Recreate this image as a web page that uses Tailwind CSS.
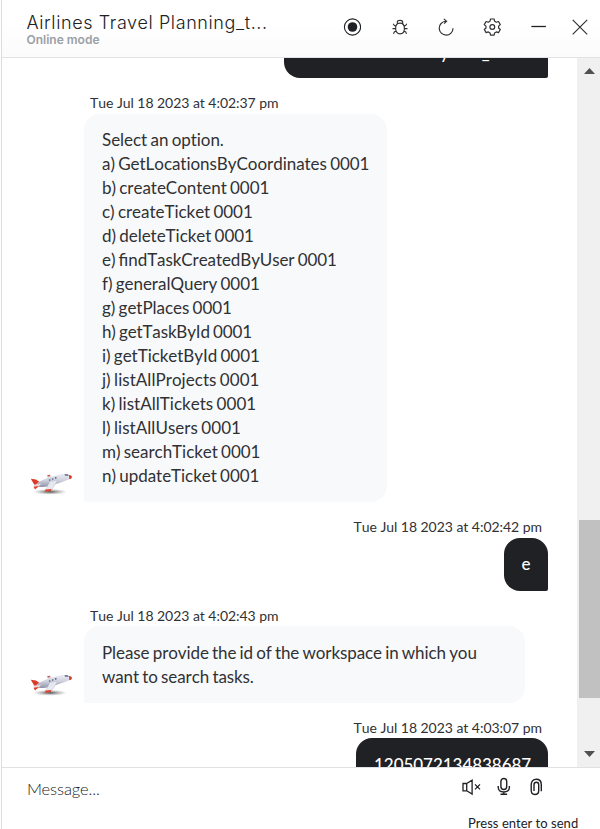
<!DOCTYPE html>
<html lang="en">
<head>
<meta charset="utf-8">
<title>Airlines Travel Planning</title>
<script src="https://cdn.jsdelivr.net/npm/@tailwindcss/browser@4"></script>
</head>
<body class="bg-white">
<svg class="absolute h-0 w-0">
  <defs>
    <linearGradient id="hull" x1="0" y1="0" x2="0" y2="1"><stop offset="0" stop-color="#eceef5"/><stop offset=".5" stop-color="#cdd0dd"/><stop offset="1" stop-color="#8f93a6"/></linearGradient>
    <radialGradient id="shade"><stop offset="0" stop-color="#444" stop-opacity=".95"/><stop offset=".5" stop-color="#777" stop-opacity=".5"/><stop offset="1" stop-color="#999" stop-opacity="0"/></radialGradient>
    <symbol id="plane" viewBox="0 0 44 26">
      <ellipse cx="20" cy="20.8" rx="17" ry="3" fill="url(#shade)"/>
      <path d="M17 5l2-1.500 2 .5 1 3-4 1z" fill="#d9dbe5"/><path d="M17 4.600l2.500-.8.6 1.200-2 .6z" fill="#e0452f"/>
      <path d="M.8 7.800l5.200.7 6 4.200-5 2.500-3-2z" fill="#dc3a26"/>
      <path d="M7 12C14 8 23 4.500 32 3c4-.7 8 0 9.500 2.500C41 8 38 9 34 10.200 26 13 17 16.500 10 16c-3-.3-4.500-2-3-4z" fill="url(#hull)"/>
      <path d="M39 4c2 0 3.200 1 2.800 2.800-.5 1.200-1.800 1.500-2.500 1.300z" fill="#d93a2a"/>
      <path d="M34.500 3.200l3.500.200.600 1.300-3.600-.2z" fill="#454b63"/>
      <path d="M20 10.500l7.500-1.300-6 10.300-6.500.5z" fill="#e6e8f0" stroke="#b9bccb" stroke-width=".4"/>
      <path d="M15.600 18.600l6-.6-.7 2-6.400.8z" fill="#e0402b"/>
      <path d="M3.500 13.800l8-1.200-3 3.200-3.600 1.700z" fill="#ead7d9"/><path d="M3.500 15.800l5.500-.8-4 3.400z" fill="#e0402b"/>
      <path d="M19 9.300l8-2.800" stroke="#3f4766" stroke-width="1.200" stroke-dasharray="1.500 1.700"/>
    </symbol>
  </defs>
</svg>
<div class="flex h-[829px] w-[600px] overflow-hidden bg-white font-['Lato',sans-serif] text-[#303134]">
  <div class="w-[2px] shrink-0 border-r border-[#dadce0]"></div>
  <div class="flex min-w-0 flex-1 flex-col">
    <header class="flex h-[58px] shrink-0 border-b border-[#e0e2e5] bg-gradient-to-b from-white from-40% to-[#fbfbfc]">
      <div class="w-[339px] pl-[24.500px] pt-[11px] font-['Inter',sans-serif]">
        <h1 class="h-[23px] whitespace-nowrap text-[18px] font-light leading-[23px] tracking-[0.61px] text-[#202124]">Airlines Travel Planning_t...</h1>
        <p class="whitespace-nowrap text-[12px] font-semibold leading-[12px] text-[#9aa0a6]">Online mode</p>
      </div>
      <div class="flex h-[53px] items-center">
        <svg class="h-5 w-5" viewBox="0 0 20 20" fill="none" stroke="#202124"><circle cx="11.500" cy="10" r="8.100" stroke-width="1.100"/><circle cx="11.500" cy="10" r="4.800" fill="#202124" stroke="none"/></svg>
        <svg class="ml-[29px] h-5 w-5" viewBox="0 0 20 20" fill="none" stroke="#303134" stroke-width="1.150"><path d="M5.600 11.500c0-3.700 1.500-5.400 4.400-5.400s4.400 1.700 4.400 5.400c0 3.200-1.800 5.300-4.400 5.300s-4.400-2.100-4.400-5.300zM7.300 6.400V5.200C7.300 4 8.300 3.300 10 3.300s2.700.7 2.700 1.900v1.200M6.200 9.100L4.200 8.400l-.9-1.700M13.800 9.100l2-.7.9-1.700M5.600 11.600H2.500M14.400 11.600h3.100M6.300 14l-2 .9-.8 2M13.700 14l2 .9.8 2"/></svg>
        <svg class="ml-[26px] h-5 w-5" viewBox="0 0 20 20" fill="none" stroke="#303134" stroke-width="1.150"><path d="M9.800 4.300A6.900 6.900 0 1 0 17 11.200M7.800 1.900l2.800 2.300-2.500 2.500"/></svg>
        <svg class="ml-[26px] h-5 w-5" viewBox="0 0 20 20" fill="none" stroke="#303134" stroke-width="1.200" stroke-linejoin="round"><circle cx="10.300" cy="10" r="2.400"/><path d="M8.500 2h3.600l.5 2.200 1.700 1 2.200-.7 1.800 3.100-1.700 1.500v1.900l1.700 1.500-1.800 3.100-2.200-.7-1.700 1-.5 2.200H8.500L8 15.900l-1.700-1-2.200.7-1.800-3.100L4 11V9.100L2.300 7.600l1.800-3.100 2.200.7L8 4.200z"/></svg>
        <svg class="ml-[27px] h-5 w-5" viewBox="0 0 20 20" stroke="#202124" stroke-width="1.300"><path d="M2.400 9.500h14.500"/></svg>
        <svg class="ml-[21px] h-5 w-5" viewBox="0 0 20 20" stroke="#303134" stroke-width="1.200"><path d="M2.700 2.800l14.500 14.500M17.200 2.800L2.700 17.300"/></svg>
      </div>
    </header>
    <main class="flex h-[709px] shrink-0 overflow-hidden">
      <div class="w-[575px] text-[17px] leading-[24px] tracking-[-0.04px] [font-kerning:none] [word-spacing:-1px]">
        <div class="ml-[282px] flex h-5 w-[264px] items-end rounded-bl-[16px] rounded-br-[2px] bg-[#202124] pb-[13px] pl-[156px] font-medium text-white"><span>y</span><span class="ml-[33px]">_</span></div>
        <p class="h-[36px] pl-[88px] pt-[14px] text-[14px] leading-[22px] [word-spacing:0px]">Tue Jul 18 2023 at 4:02:37 pm</p>
        <div class="flex h-[388px] items-end">
          <svg class="mb-[5px] ml-[28px] h-[26px] w-[44px]"><use href="#plane"/></svg>
          <div class="ml-[10px] h-full w-[303px] whitespace-nowrap rounded-[16px] rounded-bl-[2px] bg-[#f8f9fb] py-[14px] pl-[18px]">
            <p>Select an option.</p>
            <p>a) GetLocationsByCoordinates 0001</p>
            <p>b) createContent 0001</p>
            <p>c) createTicket 0001</p>
            <p>d) deleteTicket 0001</p>
            <p class="tracking-[-0.09px]">e) <span class="tracking-normal">fi</span>ndTaskCreatedByUser 0001</p>
            <p>f) generalQuery 0001</p>
            <p>g) getPlaces 0001</p>
            <p class="tracking-[-0.14px]">h) getTaskById 0001</p>
            <p>i) getTicketById 0001</p>
            <p class="tracking-[0.04px]">j) listAllProjects 0001</p>
            <p class="tracking-[0.02px]">k) listAllTickets 0001</p>
            <p class="tracking-[0.04px]">l) listAllUsers 0001</p>
            <p>m) searchTicket 0001</p>
            <p>n) updateTicket 0001</p>
          </div>
        </div>
        <p class="h-[36px] pr-[35px] pt-[14px] text-right text-[14px] leading-[22px] [word-spacing:0px]">Tue Jul 18 2023 at 4:02:42 pm</p>
        <div class="ml-[502px] h-[53px] w-[44px] rounded-[16px] rounded-br-[2px] bg-[#202124] pt-[14px] text-center font-medium text-white">e</div>
        <p class="h-[35px] pl-[88px] pt-[14px] text-[14px] leading-[22px] [word-spacing:0px]">Tue Jul 18 2023 at 4:02:43 pm</p>
        <div class="flex h-[77px] items-end">
          <svg class="mb-[5px] ml-[28px] h-[26px] w-[44px]"><use href="#plane"/></svg>
          <div class="ml-[10px] h-full w-[441px] whitespace-nowrap rounded-[16px] rounded-bl-[2px] bg-[#f8f9fb] pl-[18px] pt-[15px] tracking-[-0.09px]">
            <p>Please provide the id of the workspace in which you</p>
            <p>want to search tasks.</p>
          </div>
        </div>
        <p class="h-[35px] pr-[35px] pt-[14px] text-right text-[14px] leading-[22px] [word-spacing:0px]">Tue Jul 18 2023 at 4:03:07 pm</p>
        <div class="ml-[354px] h-[53px] w-[192px] rounded-[16px] rounded-br-[2px] bg-[#202124] pl-[18px] pt-[15px] font-medium text-white">1205072134838687</div>
      </div>
      <div class="flex w-[23px] flex-col bg-[#f0f0f0]">
        <svg class="h-[20px] w-[23px]" viewBox="0 0 23 20"><path d="M7 16l5.500-6 5.500 6z" fill="#505050"/></svg>
        <div class="ml-[2px] mt-[442px] h-[178px] bg-[#c1c1c1]"></div>
        <svg class="mt-auto h-[20px] w-[23px]" viewBox="0 0 23 20"><path d="M7 4l5.500 6 5.500-6z" fill="#505050"/></svg>
      </div>
    </main>
    <footer class="flex flex-1 justify-between border-t border-[#dfe1e4] text-[#202124]">
      <p class="pl-[25px] pt-[9px] text-[16.500px] font-light leading-[24px] tracking-[-0.1px]">Message...</p>
      <div class="flex w-[140px] flex-col">
        <div class="flex h-[38px] items-center pl-[2px]">
          <svg class="h-5 w-5" viewBox="0 0 20 20" fill="none" stroke="#202124" stroke-width="1.300"><path d="M1 6.500h3.700v7.300H1zM4.700 6.500l5.400-3.400v14l-5.400-3.300M13 7.400l5 5M18 7.400l-5 5"/></svg>
          <svg class="ml-[12px] h-5 w-5" viewBox="0 0 20 20" fill="none" stroke="#202124" stroke-width="1.400"><rect x="6.900" y="1.500" width="5.800" height="11" rx="2.900"/><path d="M4.200 9v1c0 3.100 2.200 5 5.600 5s5.600-1.900 5.600-5V9M9.800 15v2.300M6.500 17.300h6.600"/></svg>
          <svg class="ml-[12px] h-5 w-5" viewBox="0 0 20 20" fill="none" stroke="#202124" stroke-width="1.400"><path d="M15.300 14.200V7.500c0-3.200-1.900-5.200-5-5.200s-5.100 2-5.100 5.200v5.800c0 2.600 1.400 4.200 3.700 4.200s3.800-1.500 3.800-4V7.800c0-1.500-.8-2.500-2.300-2.500S8 6.300 8 7.800v6.100"/></svg>
        </div>
        <p class="whitespace-nowrap pl-[8px] pt-[6px] text-[13px] leading-[22px] tracking-[0.05px]">Press enter to send</p>
      </div>
    </footer>
  </div>
</div>
</body>
</html>
